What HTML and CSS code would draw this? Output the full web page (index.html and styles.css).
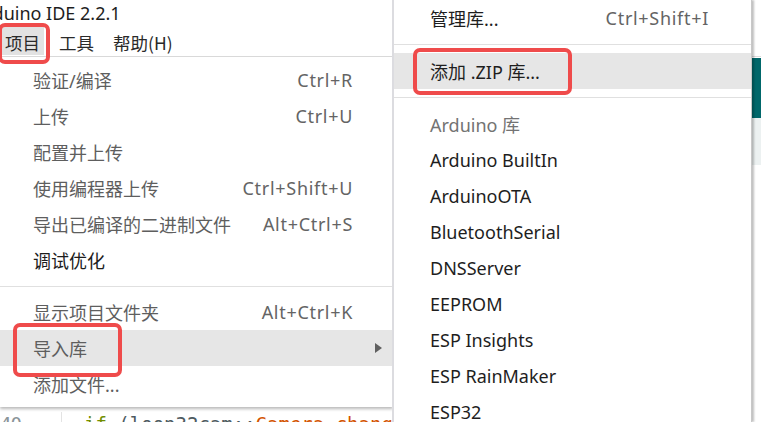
FILE: index.html
```html
<!DOCTYPE html>
<html lang="zh">
<head>
<meta charset="utf-8">
<title>Arduino IDE 2.2.1</title>
<link rel="stylesheet" href="styles.css">
</head>
<body>
<div class="screen">
  <div class="window">
    <div class="titlebar"><span class="title">Arduino IDE 2.2.1</span></div>
    <div class="menubar">
      <span class="mb-item active">项目</span>
      <span class="mb-item">工具</span>
      <span class="mb-item">帮助(H)</span>
    </div>
    <div class="toolbar"></div>
    <div class="tabs"></div>
    <div class="editor">
      <div class="code-line">
        <span class="ln">40</span>
        <span class="code"><span class="kw">if</span> (loop32cam::<span class="fn">Camera_change</span>(</span>
      </div>
    </div>
  </div>

  <div class="menu main-menu">
    <div class="row"><span class="label">验证/编译</span><span class="shortcut">Ctrl+R</span></div>
    <div class="row"><span class="label">上传</span><span class="shortcut">Ctrl+U</span></div>
    <div class="row"><span class="label">配置并上传</span></div>
    <div class="row"><span class="label">使用编程器上传</span><span class="shortcut">Ctrl+Shift+U</span></div>
    <div class="row"><span class="label">导出已编译的二进制文件</span><span class="shortcut">Alt+Ctrl+S</span></div>
    <div class="row strong"><span class="label">调试优化</span></div>
    <div class="sep"></div>
    <div class="row"><span class="label">显示项目文件夹</span><span class="shortcut">Alt+Ctrl+K</span></div>
    <div class="row hover"><span class="label">导入库</span><span class="arrow"></span></div>
    <div class="row"><span class="label">添加文件...</span></div>
  </div>

  <div class="menu sub-menu">
    <div class="row"><span class="label">管理库...</span><span class="shortcut">Ctrl+Shift+I</span></div>
    <div class="sep"></div>
    <div class="row hover"><span class="label">添加 .ZIP 库...</span></div>
    <div class="sep"></div>
    <div class="row header"><span class="label">Arduino 库</span></div>
    <div class="row"><span class="label">Arduino BuiltIn</span></div>
    <div class="row"><span class="label">ArduinoOTA</span></div>
    <div class="row"><span class="label">BluetoothSerial</span></div>
    <div class="row"><span class="label">DNSServer</span></div>
    <div class="row"><span class="label">EEPROM</span></div>
    <div class="row"><span class="label">ESP Insights</span></div>
    <div class="row"><span class="label">ESP RainMaker</span></div>
    <div class="row"><span class="label">ESP32</span></div>
  </div>

  <div class="mark mark-project"></div>
  <div class="mark mark-import"></div>
  <div class="mark mark-zip"></div>
</div>
</body>
</html>
```

FILE: styles.css
```css
* { box-sizing: border-box; }

html, body {
  margin: 0;
  padding: 0;
  background: #fff;
}

.screen {
  position: relative;
  width: 761px;
  height: 422px;
  overflow: hidden;
  font-family: "Noto Sans", "Noto Sans CJK SC", sans-serif;
  font-size: 18px;
}

.window {
  display: flex;
  flex-direction: column;
  height: 100%;
  background: #fff;
}

.titlebar {
  flex-shrink: 0;
  height: 27px;
  line-height: 27px;
  white-space: nowrap;
  overflow: hidden;
  color: #1e1e1e;
}

.title {
  display: inline-block;
  margin-left: -26px;
}

.menubar {
  flex-shrink: 0;
  height: 30px;
  display: flex;
  gap: 11px;
  padding-left: 1px;
  border-bottom: 1px solid #dcdcdc;
  color: #2a2a2a;
}

.mb-item {
  height: 28px;
  padding: 3px 4px 0;
  line-height: 26px;
  font-family: "Noto Sans CJK SC", "Noto Sans", sans-serif;
  font-size: 17.5px;
}

.mb-item.active {
  background: #e2e2e2;
}

.toolbar {
  flex-shrink: 0;
  margin-top: 1px;
  height: 60px;
  background: #00676a;
}

.tabs {
  flex-shrink: 0;
  height: 47px;
  background: #ecf1f1;
}

.editor {
  flex: 1;
  min-height: 0;
  overflow: hidden;
  padding-top: 247px;
  font-family: "DejaVu Sans Mono", monospace;
  font-size: 19px;
}

.code-line {
  display: flex;
  height: 24px;
  line-height: 24px;
  white-space: nowrap;
}

.ln {
  width: 62px;
  color: #8a9499;
  border-right: 1px solid #e3e3e3;
  letter-spacing: -1px;
}

.code {
  padding-left: 22px;
  color: #4e5b61;
}

.kw { color: #728e00; }
.fn { color: #d35400; }

/* ---------- menus ---------- */

.menu {
  position: absolute;
  background: #fff;
  font-family: "Noto Sans", "Noto Sans CJK SC", sans-serif;
  font-size: 18px;
}

.row {
  display: flex;
  align-items: center;
  height: 36px;
  white-space: nowrap;
}

.row .label {
  flex: 1;
}

.row.hover {
  background: #e6e6e6;
}

.shortcut {
  color: #646464;
  letter-spacing: 0.7px;
}

.sep {
  height: 1px;
  background: #e0e0e0;
}

.main-menu {
  left: 0;
  top: 57px;
  width: 393px;
  padding: 5px 0 5px;
  color: #5e5e5e;
  box-shadow: 0 2px 3px rgba(0, 0, 0, 0.28);
}

.main-menu .row {
  padding: 0 40px 0 33px;
}

.main-menu .row.strong {
  color: #1c1c1c;
}

.main-menu .sep {
  margin: 8px 0 7px;
}

.arrow {
  width: 0;
  height: 0;
  margin-right: -29px;
  border-left: 7px solid #606060;
  border-top: 5px solid transparent;
  border-bottom: 5px solid transparent;
}

.sub-menu {
  left: 392px;
  top: 0;
  bottom: 0;
  width: 360px;
  border-left: 2px solid #dcdce0;
  border-right: 1px solid #c8c8c8;
  color: #1e1e1e;
  box-shadow: 2px 0 2px rgba(0, 0, 0, 0.25);
}

.sub-menu .row {
  padding: 0 42px 0 36px;
}

.sub-menu .sep {
  margin: 8px 0 8px;
}

.sub-menu .row.header {
  color: #737373;
}

/* ---------- red annotation boxes ---------- */

.mark {
  position: absolute;
  border: 4px solid #ef4b4b;
  border-radius: 7px;
}

.mark-project {
  left: -2px;
  top: 23px;
  width: 52px;
  height: 41px;
}

.mark-import {
  left: 13px;
  top: 323px;
  width: 109px;
  height: 54px;
}

.mark-zip {
  left: 413px;
  top: 48px;
  width: 159px;
  height: 47px;
}
```
